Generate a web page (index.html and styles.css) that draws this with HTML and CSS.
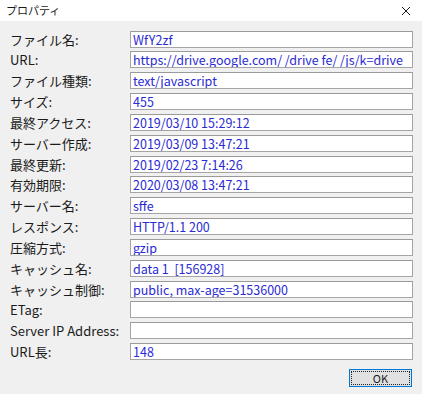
FILE: index.html
```html
<!DOCTYPE html>
<html lang="ja">
  <head>
    <meta charset="UTF-8" />
    <title>プロパティ</title>
    <link rel="stylesheet" href="styles.css">
  </head>
  <body>
    <div class="dialog">
      <div class="titlebar">
        <span class="title">プロパティ</span>
        <button class="close" aria-label="閉じる">
          <svg width="10" height="10" viewBox="0 0 10 10">
            <path d="M1 1 L9 9 M9 1 L1 9" stroke="#1a1a1a" stroke-width="1" fill="none" />
          </svg>
        </button>
      </div>

      <div class="form">
        <label>ファイル名:</label>
        <div class="field">WfY2zf</div>
        <label>URL:</label>
        <div class="field">https://drive.google.com/ /drive fe/ /js/k=drive</div>
        <label>ファイル種類:</label>
        <div class="field">text/javascript</div>
        <label>サイズ:</label>
        <div class="field">455</div>
        <label>最終アクセス:</label>
        <div class="field">2019/03/10 15:29:12</div>
        <label>サーバー作成:</label>
        <div class="field">2019/03/09 13:47:21</div>
        <label>最終更新:</label>
        <div class="field">2019/02/23 7:14:26</div>
        <label>有効期限:</label>
        <div class="field">2020/03/08 13:47:21</div>
        <label>サーバー名:</label>
        <div class="field">sffe</div>
        <label>レスポンス:</label>
        <div class="field">HTTP/1.1 200</div>
        <label>圧縮方式:</label>
        <div class="field">gzip</div>
        <label>キャッシュ名:</label>
        <div class="field">data 1&nbsp; [156928]</div>
        <label>キャッシュ制御:</label>
        <div class="field">public, max-age=31536000</div>
        <label>ETag:</label>
        <div class="field"></div>
        <label>Server IP Address:</label>
        <div class="field"></div>
        <label>URL長:</label>
        <div class="field">148</div>
      </div>

      <div class="actions">
        <button class="btn-ok">OK</button>
      </div>
    </div>
  </body>
</html>
```

FILE: styles.css
```css
:root {
  --window-color: #f0f0f0;
  --border-color: #a5a5a5;
  --value-color: #2a2ad4;
  --text-color: #1a1a1a;
}

body {
  margin: 0;
  background-color: var(--window-color);
  color: var(--text-color);
  font-family: "Noto Sans CJK JP", "Liberation Sans", sans-serif;
  font-size: 13px;
}

.dialog {
  width: 422px;
  height: 394px;
  display: flex;
  flex-direction: column;
}

.titlebar {
  height: 21px;
  background-color: #ffffff;
  display: flex;
  align-items: center;
  justify-content: space-between;
  padding-left: 6px;
}

.title {
  font-size: 11px;
  line-height: 21px;
}

.close {
  width: 30px;
  height: 21px;
  border: none;
  background: none;
  padding: 0;
  display: flex;
  align-items: center;
  justify-content: center;
  margin-right: 1px;
}

.form {
  display: grid;
  grid-template-columns: 120px 283px;
  grid-auto-rows: 17px;
  row-gap: 3.85px;
  padding: 9.5px 0 0 10px;
}

.form label {
  line-height: 17px;
  white-space: nowrap;
}

.field {
  border: 1px solid var(--border-color);
  border-top-color: #9a9a9a;
  background-color: #ffffff;
  color: var(--value-color);
  font-size: 12.5px;
  line-height: 15px;
  padding-left: 2px;
  white-space: nowrap;
  overflow: hidden;
}

.actions {
  display: flex;
  justify-content: flex-end;
  padding: 8.5px 10px 0 0;
}

.btn-ok {
  width: 63px;
  height: 18px;
  border: 1px solid #0078d7;
  background-color: #e1e1e1;
  outline: 1px dotted #222222;
  outline-offset: -3px;
  font-family: "Noto Sans CJK JP", "Liberation Sans", sans-serif;
  font-size: 11px;
  line-height: 14px;
  padding: 0;
  color: var(--text-color);
}
```
